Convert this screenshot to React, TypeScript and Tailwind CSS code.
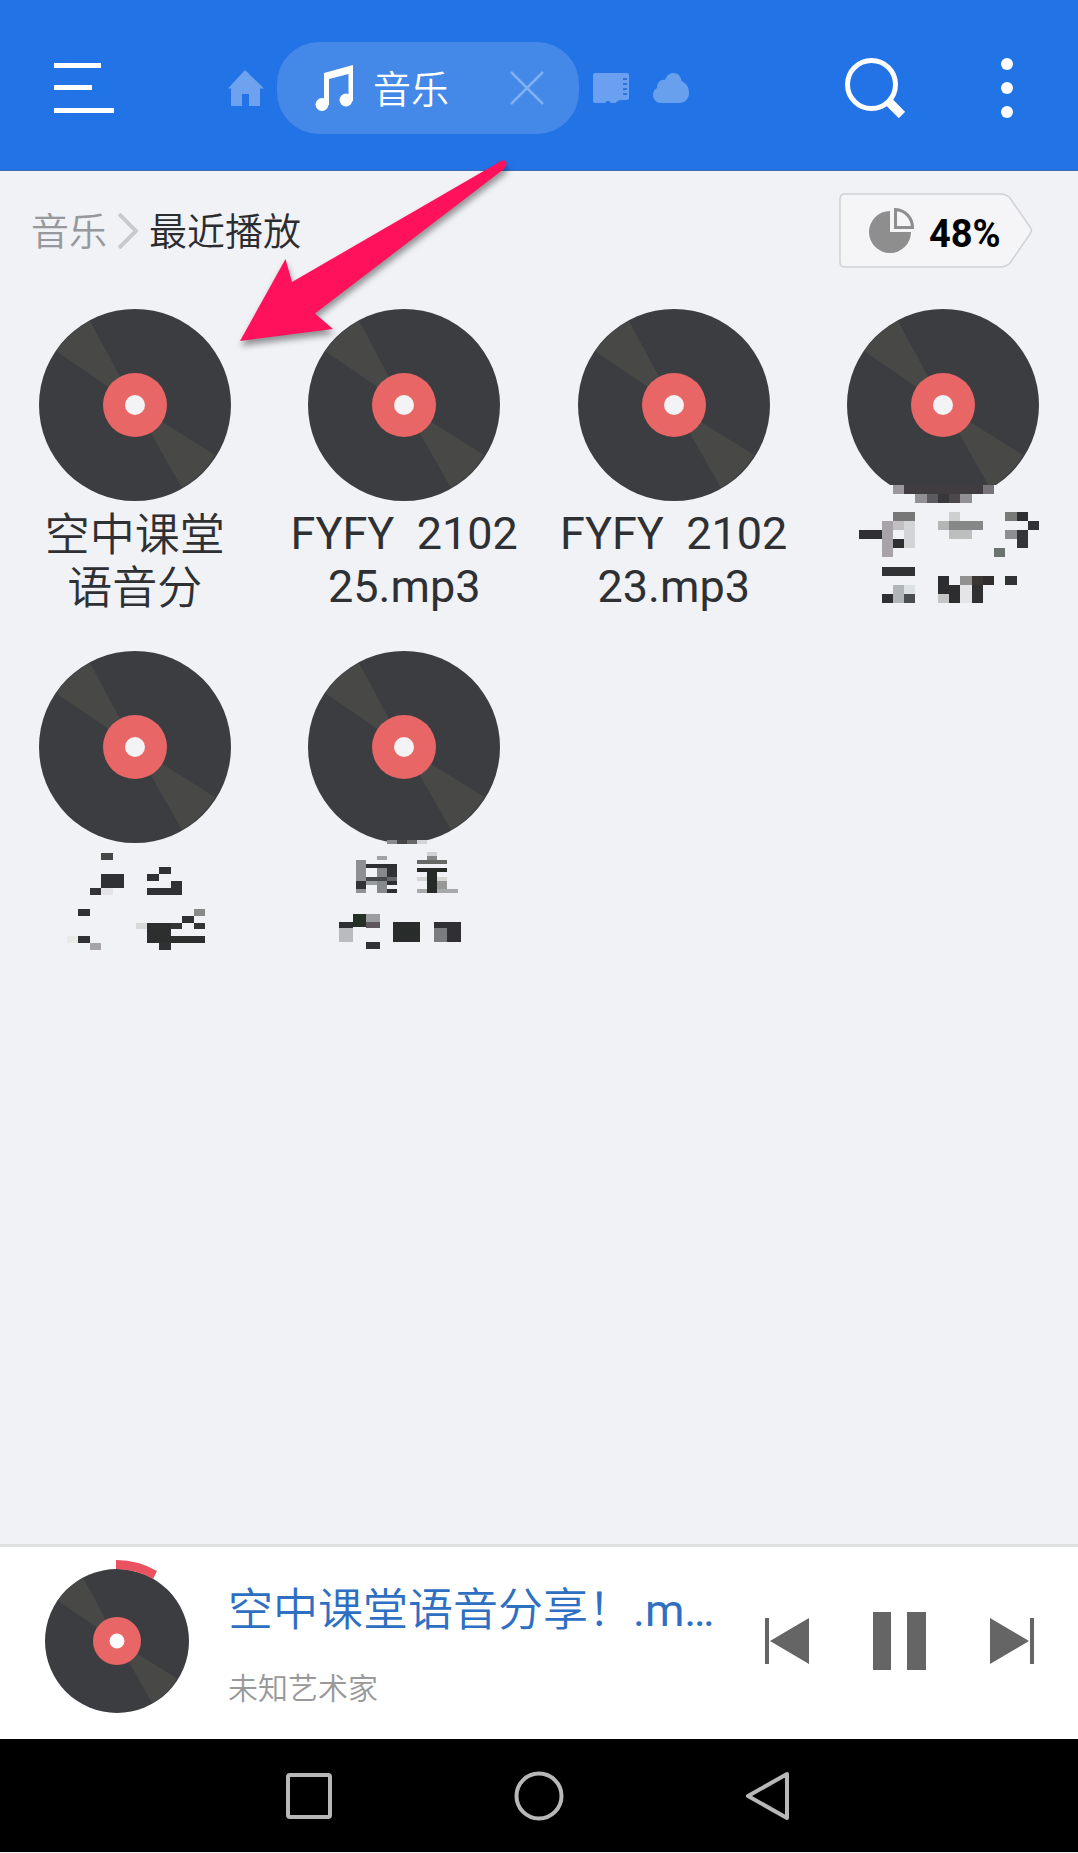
import React from "react";

type Cell = [x: number, y: number, w: number, h: number, fill: string];

type Track = {
  id: number;
  lines?: string[];
  cjk?: boolean;
  mosaic?: { viewBox: string; offset: string; cells: Cell[] };
};

const PAGE = "#f0f2f6";

const mosaicA: Cell[] = [
  [130, 75, 500, 60, PAGE],
  [219, 75, 33, 27, "#9a989b"], [252, 75, 237, 27, "#413c3f"], [489, 75, 33, 27, "#77757a"],
  [285, 102, 36, 27, "#929093"], [321, 102, 33, 27, "#5b5a5c"], [354, 102, 33, 27, "#38373a"],
  [387, 102, 33, 27, "#4c484a"], [420, 102, 36, 27, "#929093"],
  [219, 156, 66, 27, "#777777"], [387, 156, 33, 27, "#cfcfcf"], [555, 156, 36, 27, "#777a77"], [591, 156, 33, 27, "#2f2f31"],
  [186, 183, 33, 108, "#a7a3a8"], [219, 183, 33, 27, "#c1bfc2"], [252, 183, 33, 81, "#d3d4d6"],
  [354, 183, 33, 27, "#b3b4b4"], [387, 183, 102, 27, "#868887"], [387, 210, 69, 27, "#bdbfbe"],
  [624, 183, 33, 27, "#303234"], [117, 210, 69, 27, "#303033"], [219, 237, 33, 27, "#2c2f30"],
  [555, 210, 36, 27, "#8b8f92"], [591, 210, 33, 54, "#343539"], [522, 264, 33, 27, "#6b736e"],
  [186, 321, 99, 27, "#303234"], [219, 375, 33, 54, "#b0b5b6"], [186, 402, 33, 27, "#2e3032"], [252, 402, 33, 27, "#4a4d4e"],
  [252, 375, 33, 27, "#dce2e4"], [354, 348, 33, 54, "#2d2d2f"], [387, 375, 33, 54, "#2d2d2f"], [354, 402, 33, 27, "#c5c5c6"],
  [420, 348, 36, 27, "#919191"], [420, 375, 36, 54, "#e5e5e7"], [456, 348, 33, 27, "#393633"],
  [489, 348, 33, 27, "#302d2c"], [456, 375, 33, 54, "#303032"], [555, 348, 36, 27, "#303233"],
];

const mosaicB: Cell[] = [
  [183, 99, 36, 21, "#454747"], [183, 162, 69, 42, "#303132"], [150, 204, 33, 21, "#333335"], [183, 204, 36, 21, "#e4e4e6"],
  [357, 141, 36, 21, "#303132"], [321, 162, 36, 21, "#303132"], [393, 183, 33, 21, "#303132"], [321, 204, 105, 21, "#303132"],
  [114, 267, 36, 21, "#303132"], [462, 267, 33, 21, "#888989"], [426, 288, 36, 21, "#303132"],
  [288, 309, 33, 18, "#d8dada"], [321, 309, 72, 60, "#2d2f2f"], [393, 309, 33, 18, "#333535"], [462, 309, 33, 18, "#333535"],
  [393, 348, 102, 21, "#2d2f2f"], [357, 369, 36, 21, "#303132"],
  [82, 348, 32, 21, "#e8ece8"], [114, 348, 36, 21, "#303132"], [150, 369, 33, 21, "#a7a4a9"],
];

const mosaicC: Cell[] = [
  [1041, 60, 120, 12, PAGE],
  [1041, 60, 30, 12, "#8a8a8d"], [1071, 60, 30, 12, "#454548"], [1101, 60, 30, 12, "#68686b"], [1131, 60, 30, 12, "#d3d4d6"],
  [948, 120, 30, 63, "#8d9092"], [1011, 108, 30, 12, "#a0a3a5"], [978, 132, 93, 12, "#2d3031"],
  [1011, 144, 30, 74, "#858989"], [1041, 144, 30, 28, "#303233"], [978, 171, 63, 12, "#454849"],
  [1041, 171, 30, 12, "#656868"], [948, 183, 30, 24, "#303336"], [978, 183, 33, 12, "#969b9e"],
  [1041, 183, 30, 12, "#2d3031"], [948, 207, 30, 12, "#8e9195"], [1041, 207, 30, 12, "#2d3031"],
  [1161, 96, 30, 12, "#d1d1d1"], [1161, 108, 30, 12, "#848484"], [1131, 120, 90, 12, "#656864"],
  [1131, 144, 90, 12, "#252a26"], [1161, 156, 30, 63, "#252c27"], [1131, 171, 30, 12, "#d4d6d4"], [1191, 171, 30, 12, "#d4d6d4"],
  [1191, 183, 30, 24, "#979996"], [1131, 207, 30, 12, "#a6aaa8"], [1191, 207, 63, 12, "#a6aaa8"],
  [939, 282, 39, 40, "#253027"], [978, 282, 42, 24, "#9a9da1"], [897, 306, 42, 18, "#2d2f31"], [978, 306, 42, 18, "#5d575d"],
  [897, 324, 42, 42, "#babbbd"], [978, 366, 42, 21, "#303335"],
  [1059, 306, 81, 60, "#282c2b"], [1182, 306, 81, 60, "#303033"], [1182, 324, 39, 42, "#7b7c7d"],
];

const tracks: Track[] = [
  { id: 1, lines: ["空中课堂", "语音分"], cjk: true },
  { id: 2, lines: ["FYFY  2102", "25.mp3"] },
  { id: 3, lines: ["FYFY  2102", "23.mp3"] },
  { id: 4, mosaic: { viewBox: "-35 0 810 540", offset: "-mt-[41px]", cells: mosaicA } },
  { id: 5, mosaic: { viewBox: "-120 0 810 540", offset: "-mt-[23px]", cells: mosaicB } },
  { id: 6, mosaic: { viewBox: "687 0 810 540", offset: "-mt-[23px]", cells: mosaicC } },
];

function Disc({ className, hole = "#f3f3f5" }: { className: string; hole?: string }) {
  return (
    <svg viewBox="-96 -96 192 192" className={className} aria-hidden="true">
      <circle r="96" fill="#3c3d41" />
      <path d="M0 0L-45-84A96 96 0 0 0-79-54Z" fill="#484947" />
      <path d="M0 0L80 50A96 96 0 0 1 47 83Z" fill="#484846" />
      <circle r="32" fill="#e86665" />
      <circle r="10" fill={hole} />
    </svg>
  );
}

function TrackTile({ track }: { track: Track }) {
  return (
    <button type="button" aria-label={track.lines ? undefined : "音频"} className="flex h-[342px] flex-col items-center justify-start">
      <Disc className="size-48 shrink-0" />
      {track.lines && (
        <span className={`flex flex-col whitespace-pre text-[45px] leading-[53px] text-[#2f3033] ${track.cjk ? "mt-2 font-[350]" : "mt-1.5"}`}>
          {track.lines.map((line) => (
            <span key={line}>{line}</span>
          ))}
        </span>
      )}
      {track.mosaic && (
        <svg viewBox={track.mosaic.viewBox} className={`h-[180px] w-[270px] shrink-0 ${track.mosaic.offset}`} shapeRendering="crispEdges" aria-hidden="true">
          {track.mosaic.cells.map(([x, y, w, h, fill], i) => (
            <rect key={i} x={x} y={y} width={w} height={h} fill={fill} />
          ))}
        </svg>
      )}
    </button>
  );
}

function Header() {
  return (
    <header className="flex items-center border-b border-[#3a6fb5] bg-[#2273e6] pt-[42px] pr-[58px] pb-9 pl-[54px]">
      <button type="button" aria-label="菜单">
        <svg viewBox="0 0 60 50" className="h-[50px] w-[60px]" fill="#fff">
          <path d="M0 0h47v5H0zM0 22h38v5H0zM0 45h60v5H0z" />
        </svg>
      </button>
      <nav className="ml-[114px] flex items-center">
        <button type="button" aria-label="主页">
          <svg viewBox="0 0 36 36" className="size-9" fill="#6fa2ee">
            <path d="M17 0L36 18.500H32V36H21V24H14V36H3V18.500H0Z" />
          </svg>
        </button>
        <div className="ml-[13px] flex h-[92px] w-[302px] items-center rounded-[42px] bg-[#4488e8] pr-[35px] pl-[38px]">
          <svg viewBox="0 0 38 46" className="h-[46px] w-[38px]" fill="#fff" aria-hidden="true">
            <path d="M9 8L38 0V36H33.500V9L14 14V40H9Z" />
            <circle cx="7" cy="39.500" r="6.500" />
            <circle cx="31" cy="35" r="6.500" />
          </svg>
          <span className="ml-5 pt-1 text-[38px] leading-[48px] font-[350] text-white">音乐</span>
          <button type="button" aria-label="关闭" className="ml-auto">
            <svg viewBox="0 0 34 34" className="size-[34px]" fill="none" stroke="#7fb0f3" strokeWidth="2.500">
              <path d="M1 1L33 33M33 1L1 33" />
            </svg>
          </button>
        </div>
        <button type="button" aria-label="存储卡" className="ml-3.5">
          <svg viewBox="0 0 36 30" className="h-[30px] w-9">
            <path d="M2 0H34Q36 0 36 2V26L34 27H27L22 30H18L16 28H14L12 30H2Q0 30 0 28V2Q0 0 2 0Z" fill="#6b9ff0" />
            <path d="M30 5h4v2h-4zM30 10h4v2h-4zM30 15h4v2h-4zM30 20h4v2h-4z" fill="#2f72d8" />
          </svg>
        </button>
        <button type="button" aria-label="云" className="ml-6">
          <svg viewBox="0 0 36 30" className="h-[30px] w-9" fill="#68a0ee">
            <path d="M8 30C3 30 0 26 0 22C0 18.500 1.500 16.500 4 15C4 9 8 6 12 7C14 2 17 0 20.500 0C25 0 28 3.500 28.500 8C33 10 36 14 36 20C36 26 32 30 26 30Z" />
          </svg>
        </button>
      </nav>
      <button type="button" aria-label="搜索" className="ml-auto">
        <svg viewBox="0 0 60 60" className="size-[60px]" fill="none" stroke="#fff">
          <circle cx="26.500" cy="26.500" r="24" strokeWidth="5" />
          <path d="M43.500 43.500L57 57" strokeWidth="9" />
        </svg>
      </button>
      <button type="button" aria-label="更多" className="ml-[89px]">
        <svg viewBox="0 0 26 60" className="h-[60px] w-[26px]" fill="#fff">
          <circle cx="13" cy="6" r="6" />
          <circle cx="13" cy="30" r="6" />
          <circle cx="13" cy="54" r="6" />
        </svg>
      </button>
    </header>
  );
}

function PathBar() {
  return (
    <div className="flex items-center justify-between pt-[22px] pr-[45px] pl-[31px]">
      <nav className="flex items-center text-[38px] leading-[48px] font-[350]">
        <a href="#music" className="pt-0.5 text-[#97989b]">音乐</a>
        <svg viewBox="0 0 20 36" className="mx-[11px] h-9 w-5" fill="none" stroke="#c9cacd" strokeWidth="4" aria-hidden="true">
          <path d="M1 1L18 18L1 35" />
        </svg>
        <a href="#recent" className="pt-0.5 text-[#2b2c2f]">最近播放</a>
      </nav>
      <button type="button" className="relative flex h-[75px] w-[194px] items-center pl-[30px]">
        <svg viewBox="0 0 194 75" className="absolute inset-0 size-full" aria-hidden="true">
          <path d="M6 1H161Q167 1 171 5L191 34Q194 37 191 41L171 70Q167 74 161 74H6Q1 74 1 69V6Q1 1 6 1Z" fill="#f5f5f7" stroke="#d0d1d3" strokeWidth="1.500" />
        </svg>
        <svg viewBox="0 0 45 45" className="relative size-[45px]" aria-hidden="true">
          <path d="M21 3A21 21 0 1 0 42 24H21Z" fill="#8e8e8e" />
          <path d="M26.500 1.500A18 18 0 0 1 43.500 19.500H26.500Z" fill="none" stroke="#8e8e8e" strokeWidth="3" />
        </svg>
        <span className="relative ml-[15px] pt-1.5 text-[38px] leading-[44px] font-bold text-black">48%</span>
      </button>
    </div>
  );
}

function Player() {
  return (
    <section className="flex items-center border-t-3 border-[#dfe0e2] bg-white pt-[13px] pr-[44px] pb-[26px] pl-[45px]">
      <div className="relative pt-[9px]">
        <Disc className="size-36" hole="#ffffff" />
        <svg viewBox="0 0 42 20" className="absolute top-0 left-[71px] h-5 w-[42px]" aria-hidden="true">
          <path d="M0 0A81 81 0 0 1 41 11L37 19A73 73 0 0 0 0 9Z" fill="#ea5260" />
        </svg>
      </div>
      <div className="ml-[39px] flex min-w-0 flex-col gap-8 pt-4">
        <p className="truncate text-[45px] leading-[56px] text-[#2e6fc2]">
          <span className="font-[350]">空中课堂语音分享！</span>.m…
        </p>
        <p className="text-[30px] leading-9 font-[350] text-[#999999]">未知艺术家</p>
      </div>
      <div className="ml-auto flex shrink-0 items-center gap-16 pt-[9px]">
        <button type="button" aria-label="上一首">
          <svg viewBox="0 0 44 46" className="h-[46px] w-11" fill="#656565"><path d="M0 0h4v46H0zM44 0V46L5 23Z" /></svg>
        </button>
        <button type="button" aria-label="暂停">
          <svg viewBox="0 0 53 58" className="h-[58px] w-[53px]" fill="#656565"><path d="M0 0h18v58H0zM34 0h19v58H34z" /></svg>
        </button>
        <button type="button" aria-label="下一首">
          <svg viewBox="0 0 44 46" className="h-[46px] w-11" fill="#656565"><path d="M40 0h4v46h-4zM0 0V46L39 23Z" /></svg>
        </button>
      </div>
    </section>
  );
}

function SystemBar() {
  return (
    <nav className="flex h-[113px] items-center justify-center gap-[182px] bg-black">
      <button type="button" aria-label="最近任务">
        <svg viewBox="0 0 48 50" className="h-[50px] w-12" fill="none" stroke="#b8b8b8" strokeWidth="4"><rect x="4" y="4" width="42" height="42" rx="2" /></svg>
      </button>
      <button type="button" aria-label="主屏幕">
        <svg viewBox="0 0 50 50" className="size-[50px]" fill="none" stroke="#b8b8b8" strokeWidth="4"><circle cx="25" cy="25" r="22.500" /></svg>
      </button>
      <button type="button" aria-label="返回">
        <svg viewBox="0 0 48 50" className="h-[50px] w-12" fill="none" stroke="#b8b8b8" strokeWidth="4" strokeLinejoin="round"><path d="M41 3V47L2 25Z" /></svg>
      </button>
    </nav>
  );
}

export default function App() {
  return (
    <div lang="zh-CN" className="relative flex min-h-screen flex-col bg-[#f0f2f6] pb-px font-[Roboto,'Noto_Sans_CJK_SC',sans-serif]">
      <Header />
      <main className="flex-1">
        <PathBar />
        <div className="mt-[41px] grid grid-cols-4">
          {tracks.map((track) => (
            <TrackTile key={track.id} track={track} />
          ))}
        </div>
      </main>
      <Player />
      <SystemBar />
      <svg viewBox="0 0 280 200" className="pointer-events-none absolute top-[154px] left-[234px] h-[200px] w-[280px] drop-shadow-[1px_5px_3px_rgba(0,0,0,0.4)]" aria-hidden="true">
        <path d="M6 187L51.500 105L58 128L267 7Q271 5 272.500 8.500Q273 12 270 15L81 159.500L99 175Z" fill="#ff115b" />
      </svg>
    </div>
  );
}
